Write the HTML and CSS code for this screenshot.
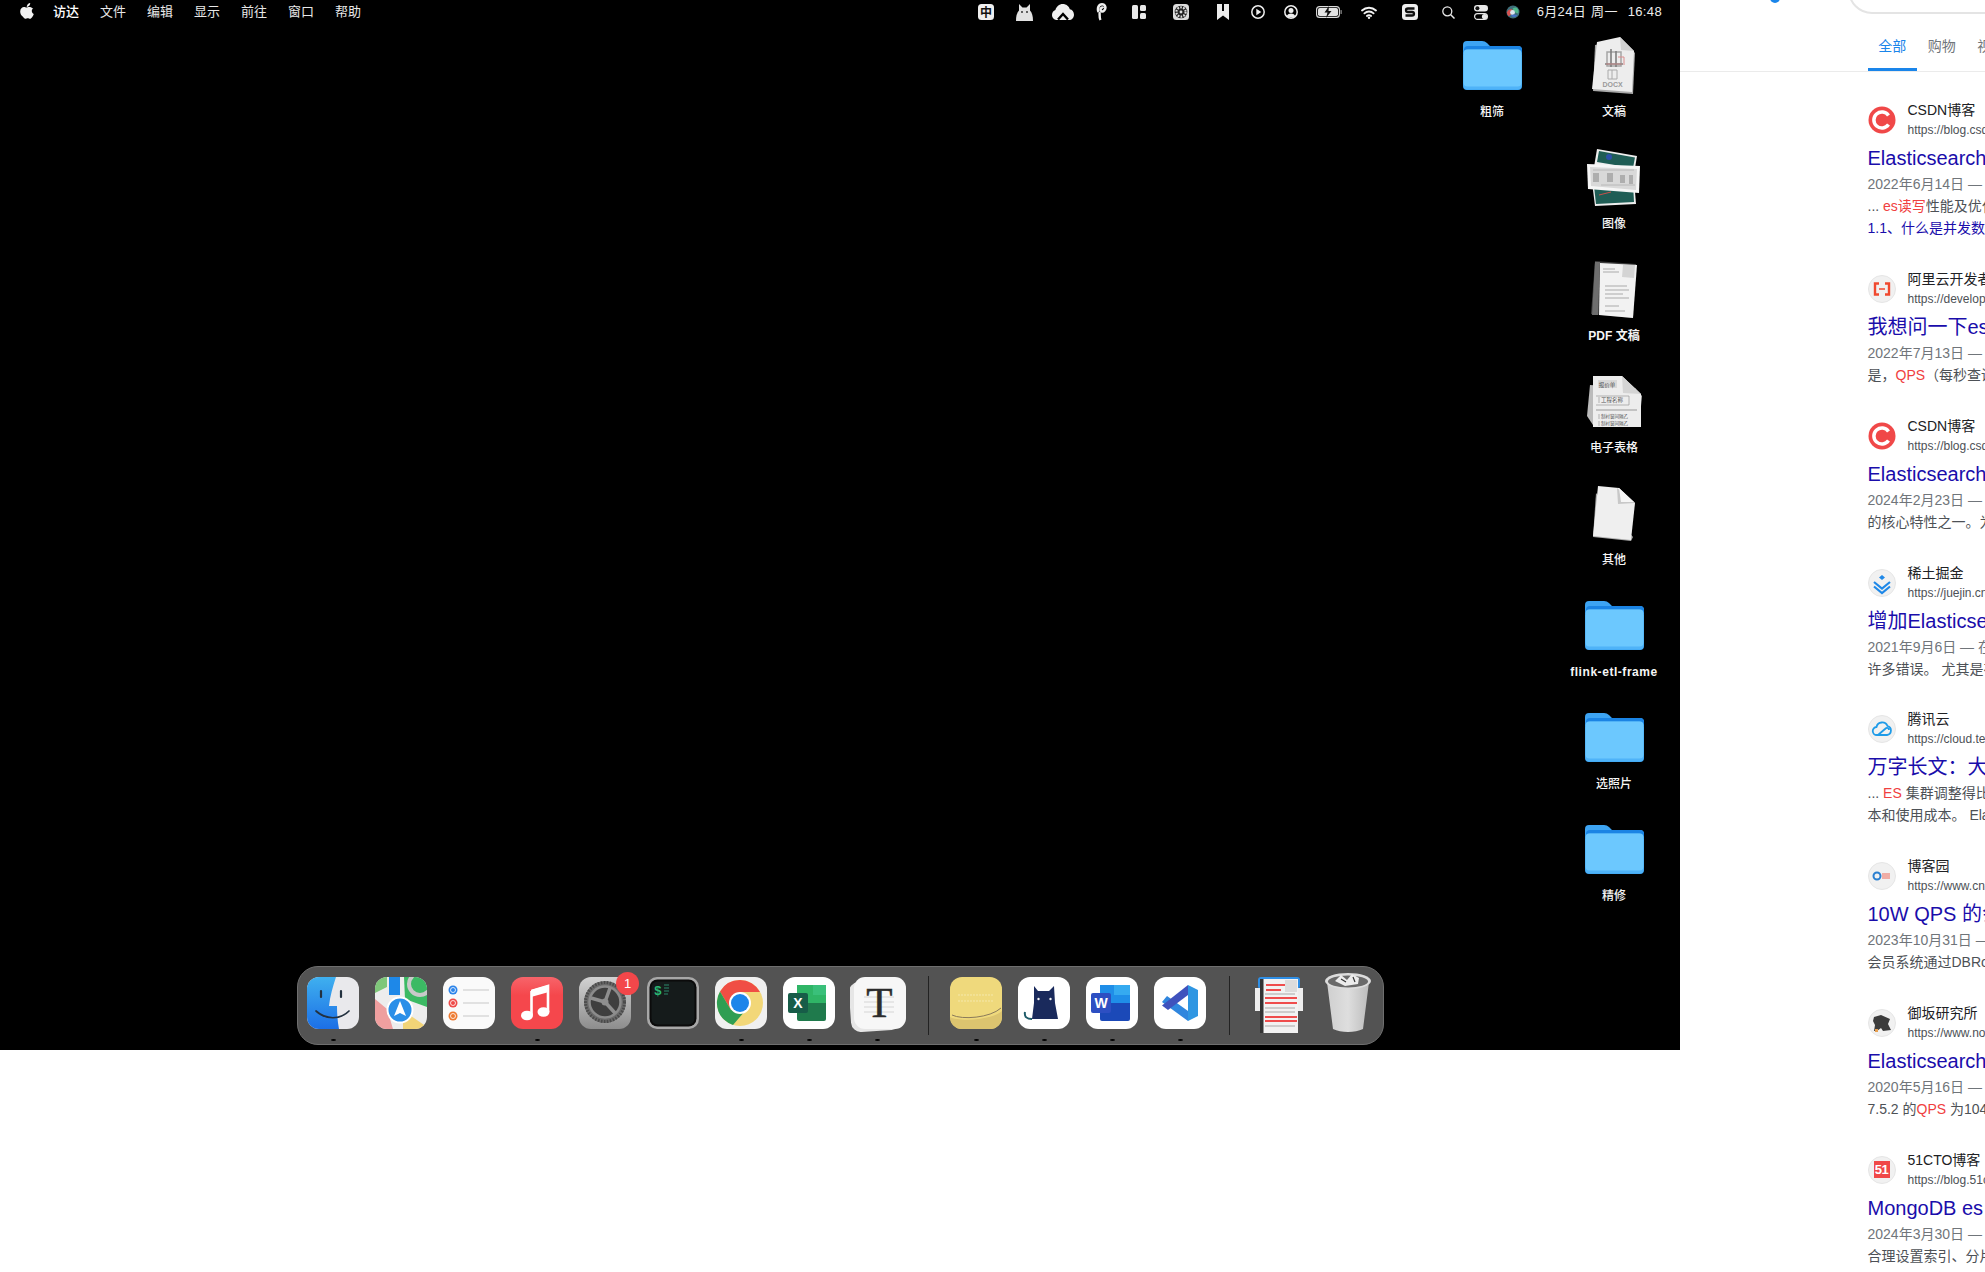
FILE: index.html
```html
<!DOCTYPE html>
<html lang="zh-CN">
<head>
<meta charset="utf-8">
<title>桌面</title>
<link rel="stylesheet" href="styles.css">
</head>
<body>
<svg class="defs" width="0" height="0" aria-hidden="true">
  <defs>
    <symbol id="folder" viewBox="0 0 59 49">
      <path d="M4 0H19q3 0 5 2l3 3H55a4 4 0 0 1 4 4V45a4 4 0 0 1-4 4H4a4 4 0 0 1-4-4V4a4 4 0 0 1 4-4z" fill="#3da4f3"/>
      <path d="M1 9a4 4 0 0 1 4-4H27H55a4 4 0 0 1 4 4v5H0z" fill="#1b84e4"/>
      <rect x="0.5" y="8.5" width="58" height="40" rx="4" fill="#4fb3f8"/>
      <rect x="0.5" y="8.5" width="58" height="37" rx="4" fill="#6cc8fe"/>
    </symbol>
    <linearGradient id="g-finder" x1="0" y1="0" x2="0" y2="1">
      <stop offset="0" stop-color="#3fb0ef"/><stop offset="1" stop-color="#1c6fe6"/>
    </linearGradient>
    <linearGradient id="g-music" x1="0" y1="0" x2="0" y2="1">
      <stop offset="0" stop-color="#f7646a"/><stop offset=".35" stop-color="#f5474c"/><stop offset="1" stop-color="#f5474c"/>
    </linearGradient>
    <linearGradient id="g-gear" x1="0" y1="0" x2="0" y2="1">
      <stop offset="0" stop-color="#d2d2d2"/><stop offset="1" stop-color="#8d8d8d"/>
    </linearGradient>
    <linearGradient id="g-trash" x1="0" y1="0" x2="1" y2="0">
      <stop offset="0" stop-color="#cfcfcf"/><stop offset=".5" stop-color="#dedede"/><stop offset="1" stop-color="#bcbcbc"/>
    </linearGradient>
  </defs>
</svg>
<div class="screen">
  <main class="desktop">
    <header class="menubar">
      <nav class="menu-left">
        <svg class="apple" viewBox="0 0 14 16"><path d="M10.200 0c.1 1.200-.4 2.100-1 2.800-.7.800-1.600 1.200-2.400 1.100C6.700 2.800 7.200 1.800 7.800 1.200 8.400.5 9.400.100 10.200 0zM13.300 5.300c-.9.600-1.500 1.500-1.500 2.700 0 1.400.8 2.400 2 2.900-.4 1.200-1 2.300-1.700 3.300-.6.800-1.200 1.600-2.100 1.600-.9 0-1.200-.5-2.300-.5-1.100 0-1.400.5-2.300.5-.9 0-1.500-.8-2.200-1.700C1 12.500.2 10.400.2 8.500c0-3 2-4.500 3.800-4.500 1 0 1.800.6 2.500.6.600 0 1.600-.7 2.700-.7 1.100 0 2.400.5 3.300 1.400z" fill="#f2f2f2"/></svg>
        <span class="menu-item menu-active">访达</span>
        <span class="menu-item">文件</span>
        <span class="menu-item">编辑</span>
        <span class="menu-item">显示</span>
        <span class="menu-item">前往</span>
        <span class="menu-item">窗口</span>
        <span class="menu-item">帮助</span>
      </nav>
      <div class="status">
        <svg class="st st-zh" viewBox="0 0 16 16"><rect width="16" height="16" rx="3.500" fill="#efefef"/><text x="8" y="12.500" class="st-glyph" text-anchor="middle">中</text></svg>
        <svg class="st st-cat" viewBox="0 0 17 18"><path d="M0 18c0-5 1-8.500 3-10.500V1L6.500 4.500h4L14 1v6.500c2 2 3 5.500 3 10.500z" fill="#e2e2e2"/><circle cx="6" cy="9" r=".9" fill="#222"/><circle cx="11" cy="9" r=".9" fill="#222"/></svg>
        <svg class="st st-cloud" viewBox="0 0 22 16"><path d="M5 16C2.200 16 0 13.800 0 11c0-2.300 1.400-4.300 3.400-4.900C4.200 2.600 7.200 0 10.800 0c3.300 0 6.100 2.100 7 5.200C20.200 5.500 22 7.800 22 10.700 22 13.700 19.800 16 17 16z" fill="#f0f0f0"/><path d="M6 15.500l5-5.500 5 5.500" fill="none" stroke="#000" stroke-width="2.400"/></svg>
        <svg class="st st-p" viewBox="0 0 11 18"><path d="M2.500 9C1 5 2.800 1.300 6 1.300S10.500 5 8.300 7.300 4.600 8 4.600 6.200 6.500 4.200 7.200 5.200" fill="none" stroke="#efefef" stroke-width="2.500"/><path d="M3.500 9c.5 2.800-.5 5.300 1 8" fill="none" stroke="#efefef" stroke-width="2.400"/></svg>
        <svg class="st st-split" viewBox="0 0 14 14"><rect width="6" height="14" rx="1.500" fill="#e8e8e8"/><rect x="8" width="6" height="6" rx="1.500" fill="#e8e8e8"/><rect x="8" y="8" width="6" height="6" rx="1.500" fill="#e8e8e8"/></svg>
        <svg class="st st-wheel" viewBox="0 0 16 16"><rect width="16" height="16" rx="3.500" fill="#dcdcdc"/><circle cx="8" cy="8" r="6.300" fill="#222"/><circle cx="8" cy="8" r="4.600" fill="none" stroke="#ddd" stroke-width="2.200" stroke-dasharray="1.700 1.200"/><circle cx="8" cy="8" r="1.400" fill="#ddd"/></svg>
        <svg class="st st-mark" viewBox="0 0 12 16"><path d="M0 0h5v7H7V0h5v16L6 11.500 0 16z" fill="#ececec"/></svg>
        <svg class="st st-play" viewBox="0 0 14 14"><circle cx="7" cy="7" r="6.200" fill="none" stroke="#eee" stroke-width="1.500"/><path d="M5.300 3.800l5 3.200-5 3.200z" fill="#eee"/></svg>
        <svg class="st st-user" viewBox="0 0 14 14"><circle cx="7" cy="7" r="6.200" fill="none" stroke="#eee" stroke-width="1.500"/><circle cx="7" cy="5.500" r="2.500" fill="#eee"/><path d="M2.800 11c1-2 2.500-2.600 4.200-2.600s3.200.6 4.200 2.600c-2.500 2-5.900 2-8.400 0z" fill="#eee"/></svg>
        <svg class="st st-batt" viewBox="0 0 26 12"><rect x=".6" y=".6" width="22.800" height="10.800" rx="3" fill="none" stroke="#ddd" stroke-width="1.100"/><rect x="2" y="2" width="20" height="8" rx="1.800" fill="#e4e4e4"/><path d="M13 0L8.500 6.500h3L10 12l5.500-7h-3z" fill="#111"/><rect x="24.500" y="4" width="1.300" height="4" rx=".6" fill="#888"/></svg>
        <svg class="st st-wifi" viewBox="0 0 16 13"><path d="M1 4.500a10.300 10.300 0 0 1 14 0M3.400 7.300a6.800 6.800 0 0 1 9.200 0M5.900 10a3.200 3.200 0 0 1 4.200 0" fill="none" stroke="#f2f2f2" stroke-width="1.800" stroke-linecap="round"/><circle cx="8" cy="11.700" r="1.200" fill="#f2f2f2"/></svg>
        <svg class="st st-s" viewBox="0 0 16 16"><rect width="16" height="16" rx="3.500" fill="#efefef"/><path d="M12.500 4.500H6C4.500 4.500 4 5.500 4 6.200S4.500 8 6 8h4c1.500 0 2 1 2 1.800s-.5 1.700-2 1.700H3.500" fill="none" stroke="#111" stroke-width="2.300"/></svg>
        <svg class="st st-search" viewBox="0 0 13 13"><circle cx="5.300" cy="5.300" r="4.500" fill="none" stroke="#e8e8e8" stroke-width="1.300"/><path d="M8.500 8.500l4 4" stroke="#e8e8e8" stroke-width="1.500"/></svg>
        <svg class="st st-ctl" viewBox="0 0 14 15"><rect width="14" height="6.500" rx="3.200" fill="#e8e8e8"/><circle cx="3.400" cy="3.200" r="2" fill="#111"/><rect x=".6" y="8.600" width="12.800" height="5.800" rx="2.900" fill="none" stroke="#e8e8e8" stroke-width="1.200"/><circle cx="10.500" cy="11.500" r="2.600" fill="#e8e8e8"/></svg>
        <svg class="st st-siri" viewBox="0 0 15 15"><circle cx="7.500" cy="7.500" r="7" fill="#3f6f7a"/><path d="M1 8c1-3 4-4 6-3 0 3-2 6-4 7-1-1-2-2.500-2-4z" fill="#d8504f"/><path d="M7 4c2-1.500 4-2 5.500 0 1 1.500 1.200 3.500.5 5-2 0-5-2-6-5z" fill="#4fb98c"/><circle cx="7" cy="8" r="2.600" fill="#dbe6ee"/><path d="M5 11c2-1 5-1 7 0-1 2-5 3-7 0z" fill="#4470c8"/></svg>
        <span class="clock">6月24日 周一&nbsp;&nbsp;16:48</span>
      </div>
    </header>

    <section class="desk-grid">
      <div class="desk-item">
        <div class="desk-icon"><svg class="ic-folder"><use href="#folder"/></svg></div>
        <span class="desk-label">粗筛</span>
      </div>
      <div class="desk-item">
        <div class="desk-icon">
          <svg class="ic-doc" viewBox="0 0 44 57">
            <path d="M3 8L30 3 43 16 41 57 1 54z" fill="#a9a9a9"/>
            <path d="M5 5L28 0 42 14 40 55 0 52z" fill="#ededed"/>
            <path d="M28 0L42 14 29 13z" fill="#d0d0d0"/>
            <path d="M15 15h14v14H15z" fill="none" stroke="#a5a5a5" stroke-width="1.500"/>
            <path d="M19 12v18M24 14v16M13 27h18" stroke="#7f7f7f" stroke-width="1.600"/>
            <path d="M26 20h6v8" stroke="#d98d8d" stroke-width="1" fill="none"/>
            <path d="M14 27h16" stroke="#d98d8d" stroke-width=".8"/>
            <path d="M16 33h9v9h-9zM20 33v9" fill="none" stroke="#aaa"/>
            <text x="20.500" y="50" class="tiny tiny-docx" text-anchor="middle">DOCX</text>
          </svg>
        </div>
        <span class="desk-label">文稿</span>
      </div>
      <div class="desk-spacer"></div>
      <div class="desk-item">
        <div class="desk-icon">
          <svg class="ic-img" viewBox="0 0 54 57">
            <path d="M10 0L50 7 46 31 6 24z" fill="#eee"/>
            <path d="M12 2L48 8.500 46 19 10 13z" fill="#1f5d55"/>
            <circle cx="22" cy="8" r="3" fill="#2b50a8"/>
            <path d="M5 33L47 30 49 55 8 57z" fill="#eee"/>
            <path d="M7 37L46 34 47 53 9 55z" fill="#1f5d55"/>
            <path d="M12 46L24 43" stroke="#c9504a" stroke-width="1"/>
            <path d="M0 15L53 17 52 44 1 40z" fill="#f6f6f6"/>
            <path d="M3 18L50 20 49 41 4 37z" fill="#d9d9d9"/>
            <path d="M6 24h6v9H6zM20 24h6v9h-6zM33 26h5v8h-5zM42 26h4v9h-4z" fill="#aeaeae"/>
            <path d="M14 36H48M6 21H47" stroke="#b8b8b8"/>
          </svg>
        </div>
        <span class="desk-label">图像</span>
      </div>
      <div class="desk-spacer"></div>
      <div class="desk-item">
        <div class="desk-icon">
          <svg class="ic-pdf" viewBox="0 0 46 57">
            <path d="M4 0L45 3 42 57 0 53z" fill="#3c3c3c"/>
            <path d="M9 2L46 4 42 57 8 54z" fill="#f2f2f2"/>
            <path d="M4 1h5L7 54H1z" fill="#6e6e6e"/>
            <path d="M12 8h12M12 11h16M14 25h22M14 29h24M14 33h18M14 37h24M14 45h14M14 50h20" stroke="#aaa" stroke-width="1.200"/>
            <path d="M32 4L44 4 43 17 31 16z" fill="#d4d4d4"/>
          </svg>
        </div>
        <span class="desk-label desk-label-latin">PDF 文稿</span>
      </div>
      <div class="desk-spacer"></div>
      <div class="desk-item">
        <div class="desk-icon">
          <svg class="ic-sheet" viewBox="0 0 55 51">
            <path d="M3 9L0 40 6 49 52 50 55 20 48 12z" fill="#bbb"/>
            <path d="M6 0H35L54 18V51H6z" fill="#ededed"/>
            <path d="M35 0L54 18 36 17z" fill="#d4d4d4"/>
            <rect x="11" y="4" width="19" height="8" fill="#d8d8d8"/>
            <text x="20" y="10.500" class="tiny" text-anchor="middle">报价单</text>
            <text x="14" y="26" class="tiny">工程名称</text>
            <path d="M12 21v6M12 38v5M12 45v5M9 20H42V29H9" fill="none" stroke="#999" stroke-width=".7"/>
            <text x="14" y="42" class="tiny tiny-sm">制衬窗间隔乙</text>
            <text x="14" y="49" class="tiny tiny-sm">制衬窗间隔乙</text>
            <path d="M9 34H50" stroke="#999"/>
          </svg>
        </div>
        <span class="desk-label">电子表格</span>
      </div>
      <div class="desk-spacer"></div>
      <div class="desk-item">
        <div class="desk-icon">
          <svg class="ic-other" viewBox="0 0 43 56">
            <path d="M3 8L40 52 38 56 0 52z" fill="#aaa"/>
            <path d="M5 1L26 3 42 18 38 55 0 51z" fill="#efefef"/>
            <path d="M24 3L42 18 25 19z" fill="#c8c8c8"/>
            <path d="M26 3L41 17 28 17z" fill="#f6f6f6"/>
          </svg>
        </div>
        <span class="desk-label">其他</span>
      </div>
      <div class="desk-spacer"></div>
      <div class="desk-item">
        <div class="desk-icon"><svg class="ic-folder"><use href="#folder"/></svg></div>
        <span class="desk-label desk-label-latin desk-label-wide">flink-etl-frame</span>
      </div>
      <div class="desk-spacer"></div>
      <div class="desk-item">
        <div class="desk-icon"><svg class="ic-folder"><use href="#folder"/></svg></div>
        <span class="desk-label">选照片</span>
      </div>
      <div class="desk-spacer"></div>
      <div class="desk-item">
        <div class="desk-icon"><svg class="ic-folder"><use href="#folder"/></svg></div>
        <span class="desk-label">精修</span>
      </div>
    </section>

    <footer class="dock">
      <div class="dock-item running">
        <svg class="app" viewBox="0 0 52 52">
          <rect width="52" height="52" rx="12" fill="#e9e9ec"/>
          <path d="M12 0H29C26 9 23 19 22 29h8c0 8 .5 15 2 23H12A12 12 0 0 1 0 40V12A12 12 0 0 1 12 0z" fill="url(#g-finder)"/>
          <path d="M14 14v6M34 14v6" stroke="#23313f" stroke-width="2.200" stroke-linecap="round"/>
          <path d="M9 34c10 9 24 9 33 0" fill="none" stroke="#23313f" stroke-width="1.700" stroke-linecap="round"/>
        </svg>
        <i class="dot"></i>
      </div>
      <div class="dock-item">
        <svg class="app" viewBox="0 0 52 52">
          <defs><clipPath id="c-maps"><rect width="52" height="52" rx="12"/></clipPath></defs>
          <g clip-path="url(#c-maps)">
            <rect width="52" height="52" fill="#ededed"/>
            <path d="M29 0H52V30L30 22z" fill="#3cba64"/>
            <circle cx="45" cy="7" r="11" fill="none" stroke="#c9c9c9" stroke-width="4"/>
            <path d="M0 0H12V10L0 16z" fill="#7fc77a"/>
            <path d="M0 22L12 32 18 52H0z" fill="#ef9f9f"/>
            <path d="M28 46L36 39 52 50V52H28z" fill="#f2d477"/>
            <path d="M14 0H25V18H14z" fill="#1e88e8"/>
            <circle cx="25" cy="33" r="12.500" fill="#2a8fe8" stroke="#fff" stroke-width="2"/>
            <path d="M25 24L31 39 25 36 19 39z" fill="#fff"/>
          </g>
        </svg>
        <i class="dot dot-off"></i>
      </div>
      <div class="dock-item">
        <svg class="app" viewBox="0 0 52 52">
          <rect width="52" height="52" rx="12" fill="#fafafa"/>
          <circle cx="10" cy="13" r="4.500" fill="#2c84ea"/><circle cx="10" cy="13" r="2.500" fill="none" stroke="#fff" stroke-width=".8"/>
          <circle cx="10" cy="26" r="4.500" fill="#ee4a48"/><circle cx="10" cy="26" r="2.500" fill="none" stroke="#fff" stroke-width=".8"/>
          <circle cx="10" cy="39" r="4.500" fill="#ee7a30"/><circle cx="10" cy="39" r="2.500" fill="none" stroke="#fff" stroke-width=".8"/>
          <path d="M20 13H46M20 26H46M20 39H46" stroke="#c8c8c8" stroke-width="1.200"/>
        </svg>
        <i class="dot dot-off"></i>
      </div>
      <div class="dock-item running">
        <svg class="app" viewBox="0 0 52 52">
          <rect width="52" height="52" rx="12" fill="url(#g-music)"/>
          <path d="M20.500 14L37 9V35M20.500 14V38" fill="none" stroke="#fff" stroke-width="2.600"/>
          <path d="M20 13L37.800 8V15L20 20z" fill="#fff"/>
          <ellipse cx="16" cy="38.500" rx="6" ry="4.800" fill="#fff"/>
          <ellipse cx="32.500" cy="35" rx="6" ry="4.800" fill="#fff"/>
        </svg>
        <i class="dot"></i>
      </div>
      <div class="dock-item">
        <svg class="app" viewBox="0 0 52 52">
          <rect width="52" height="52" rx="12" fill="url(#g-gear)"/>
          <circle cx="26" cy="25" r="21" fill="#6a6a6a"/>
          <circle cx="26" cy="25" r="19.500" fill="none" stroke="#4a4a4a" stroke-width="3" stroke-dasharray="1.600 1.400"/>
          <circle cx="26" cy="25" r="15.500" fill="#3f3f3f" stroke="#8b8b8b" stroke-width="2.500"/>
          <path d="M26 25L31 11M26 25L12 21M26 25L36 36" stroke="#8f8f8f" stroke-width="3.500"/>
          <circle cx="26" cy="25" r="3.500" fill="#8f8f8f"/>
        </svg>
        <i class="dot dot-off"></i>
        <span class="badge">1</span>
      </div>
      <div class="dock-item">
        <svg class="app" viewBox="0 0 52 52">
          <rect width="52" height="52" rx="10" fill="#a8a8a8"/>
          <rect x="2.500" y="2.500" width="47" height="47" rx="8" fill="#0b0b0b"/>
          <rect x="4.500" y="4.500" width="43" height="43" rx="6" fill="#151b1b"/>
          <text x="7" y="18" class="term">$</text>
          <path d="M17 8h5M17 11h5M17 14h5M17 17h4" stroke="#2c8a6c" stroke-width="1"/>
        </svg>
        <i class="dot dot-off"></i>
      </div>
      <div class="dock-item running">
        <svg class="app" viewBox="0 0 52 52">
          <rect width="52" height="52" rx="12" fill="#f0f0f0"/>
          <circle cx="25" cy="26" r="23" fill="#f2d778"/>
          <path d="M25 3A23 23 0 0 0 5 14.500L16 33 25 15H45A23 23 0 0 0 25 3z" fill="#f04e44"/>
          <path d="M5 14.500A23 23 0 0 0 18 48L30 34 16 33z" fill="#2f9e52"/>
          <circle cx="25" cy="26" r="11" fill="#fff"/>
          <circle cx="25" cy="26" r="9" fill="#1d85ea"/>
        </svg>
        <i class="dot"></i>
      </div>
      <div class="dock-item running">
        <svg class="app" viewBox="0 0 52 52">
          <rect width="52" height="52" rx="12" fill="#fff"/>
          <rect x="14" y="8" width="29" height="36" rx="2" fill="#1f7a4c"/>
          <path d="M14 8H43V26H14z" fill="#2fb566"/>
          <path d="M30 8H43V18H30z" fill="#3ac07a"/>
          <rect x="5" y="16" width="20" height="20" rx="2" fill="#175c48"/>
          <text x="15" y="31" class="app-letter" text-anchor="middle">X</text>
        </svg>
        <i class="dot"></i>
      </div>
      <div class="dock-item running">
        <svg class="app app-wide" viewBox="0 0 56 55">
          <rect x="0" y="4" width="50" height="50" rx="10" transform="rotate(-4 25 30)" fill="#e6e6e6"/>
          <rect x="4" y="0" width="52" height="52" rx="11" fill="#f7f7f7"/>
          <path d="M14 20H44M14 25H44M14 30H44M14 35H44" stroke="#e6e6e6" stroke-width="2"/>
          <text x="29.500" y="40" class="typora-t" text-anchor="middle">T</text>
        </svg>
        <i class="dot"></i>
      </div>
      <span class="dock-sep dock-sep-a"></span>
      <div class="dock-item running">
        <svg class="app" viewBox="0 0 52 52">
          <rect width="52" height="52" rx="12" fill="#efd97c"/>
          <path d="M0 40c10 5 42 3 52-6V40A12 12 0 0 1 40 52H12A12 12 0 0 1 0 40z" fill="#dcc46f"/>
          <path d="M2 38c10 5 38 3 49-7" fill="none" stroke="#8a7a5a" stroke-width="1"/>
          <path d="M8 18H44M8 24H44" stroke="#f5e8aa" stroke-width="1" stroke-dasharray="2 1"/>
        </svg>
        <i class="dot"></i>
      </div>
      <div class="dock-item running">
        <svg class="app" viewBox="0 0 52 52">
          <rect width="52" height="52" rx="12" fill="#fff"/>
          <path d="M16 9L20 14H31L36 9 37 26 40 42H14L16 26z" fill="#1a2a5c"/>
          <path d="M14 42c-5 0-8-2-7-7" fill="none" stroke="#1d5a68" stroke-width="2"/>
          <circle cx="20.500" cy="22" r="1.200" fill="#f4f4f4"/><circle cx="32.500" cy="22" r="1.200" fill="#f4f4f4"/>
        </svg>
        <i class="dot"></i>
      </div>
      <div class="dock-item running">
        <svg class="app" viewBox="0 0 52 52">
          <rect width="52" height="52" rx="12" fill="#fff"/>
          <rect x="14" y="8" width="30" height="36" rx="2" fill="#1b49b8"/>
          <path d="M14 8H44V26H14z" fill="#1f8ee8"/>
          <path d="M28 8H44V18H28z" fill="#35aaf0"/>
          <rect x="5" y="16" width="20" height="20" rx="2" fill="#2d4fc2"/>
          <text x="15" y="31" class="app-letter" text-anchor="middle">W</text>
        </svg>
        <i class="dot"></i>
      </div>
      <div class="dock-item running">
        <svg class="app" viewBox="0 0 52 52">
          <rect width="52" height="52" rx="12" fill="#fff"/>
          <path d="M13 19L34 34V44L8 25z" fill="#2f86de"/>
          <path d="M34 8V18L14 33 8 28.500z" fill="#3f52bd"/>
          <path d="M34 8L44 13V39L34 44z" fill="#2f96e2"/>
        </svg>
        <i class="dot"></i>
      </div>
      <span class="dock-sep dock-sep-b"></span>
      <div class="dock-item">
        <svg class="app app-preview" viewBox="0 0 48 56">
          <rect x="3" y="0" width="42" height="12" rx="3" fill="#2f8fe6"/>
          <rect x="0" y="11" width="48" height="23" fill="#eee"/>
          <rect x="5" y="2" width="38" height="54" fill="#f2f2f2"/>
          <rect x="5" y="2" width="3.500" height="54" fill="#333"/>
          <path d="M11 8H30M11 13H26M10 21H42M10 26H42M10 40H42M10 44H42" stroke="#ef4d4d" stroke-width="1.800"/>
          <path d="M10 17H40M10 31H40M10 35H40M10 49H40" stroke="#a8a8a8" stroke-width="1.200"/>
          <rect x="30" y="3" width="12" height="12" fill="#dcdcdc"/>
        </svg>
        <i class="dot dot-off"></i>
      </div>
      <div class="dock-item">
        <svg class="app app-trash" viewBox="0 0 46 60">
          <path d="M2 10C8 16 38 16 44 10L38 57C30 61 16 61 8 57z" fill="url(#g-trash)"/>
          <ellipse cx="23" cy="9" rx="23" ry="8" fill="#dcdcdc"/>
          <ellipse cx="23" cy="9.500" rx="20" ry="6" fill="#6a6a6a"/>
          <path d="M10 9L16 3 22 8 27 2 34 6 33 12 20 14z" fill="#ececec"/>
          <path d="M16 7L21 10M28 5L30 10" stroke="#333" stroke-width="1.200"/>
        </svg>
        <i class="dot dot-off"></i>
      </div>
    </footer>
  </main>

  <aside class="panel">
    <i class="panel-dot"></i>
    <div class="searchbox"></div>
    <nav class="tabs">
      <span class="tab tab-active">全部</span>
      <span class="tab">购物</span>
      <span class="tab">视频</span>
    </nav>
    <div class="results">
      <article class="result">
        <div class="source">
          <span class="fav fav-bare"><svg viewBox="0 0 28 28"><circle cx="14" cy="14" r="13.500" fill="#f04848"/><path d="M20.500 9.500a8 8 0 1 0 0 9" fill="none" stroke="#fff" stroke-width="3.500"/></svg></span>
          <div class="source-text"><div class="site">CSDN博客</div><div class="url">https://blog.csdn.net</div></div>
        </div>
        <h3 class="title">Elasticsearch 读写性能优化</h3>
        <p class="line date">2022年6月14日 — 读写性能优化</p>
        <p class="line">... <em>es读写</em>性能及优化的总结内容</p>
        <p class="line link">1.1、什么是并发数和吞吐量</p>
      </article>
      <article class="result">
        <div class="source">
          <span class="fav"><svg viewBox="0 0 28 28"><path d="M11 8.500H7v11h4M17 8.500h4v11h-4" fill="none" stroke="#f0492f" stroke-width="2.400"/><path d="M11 14h6" stroke="#f0492f" stroke-width="1.500"/></svg></span>
          <div class="source-text"><div class="site">阿里云开发者社区</div><div class="url">https://developer.aliyun.com</div></div>
        </div>
        <h3 class="title">我想问一下es的读写性能</h3>
        <p class="line date">2022年7月13日 — 想问一下</p>
        <p class="line">是，<em>QPS</em>（每秒查询率）是衡量标准</p>
      </article>
      <article class="result">
        <div class="source">
          <span class="fav fav-bare"><svg viewBox="0 0 28 28"><circle cx="14" cy="14" r="13.500" fill="#f04848"/><path d="M20.500 9.500a8 8 0 1 0 0 9" fill="none" stroke="#fff" stroke-width="3.500"/></svg></span>
          <div class="source-text"><div class="site">CSDN博客</div><div class="url">https://blog.csdn.net</div></div>
        </div>
        <h3 class="title">Elasticsearch 的性能优化</h3>
        <p class="line date">2024年2月23日 — 性能优化</p>
        <p class="line">的核心特性之一。为了提升性能</p>
      </article>
      <article class="result">
        <div class="source">
          <span class="fav"><svg viewBox="0 0 28 28"><path d="M14 6l3 2.500-3 2.500-3-2.500z" fill="#1e88e8"/><path d="M6 13l8 6.500 8-6.500M6 17.500l8 6.500 8-6.500" fill="none" stroke="#1e88e8" stroke-width="2.200"/></svg></span>
          <div class="source-text"><div class="site">稀土掘金</div><div class="url">https://juejin.cn</div></div>
        </div>
        <h3 class="title">增加Elasticsearch写入性能</h3>
        <p class="line date">2021年9月6日 — 在写入时</p>
        <p class="line">许多错误。 尤其是在高并发下</p>
      </article>
      <article class="result">
        <div class="source">
          <span class="fav"><svg viewBox="0 0 28 28"><path d="M9 20a4 4 0 0 1-.5-8A5.800 5.800 0 0 1 19.500 11 4.600 4.600 0 0 1 19 20zM10 20l7-6c2-2 4-1 4 1" fill="none" stroke="#1e9be8" stroke-width="1.800"/></svg></span>
          <div class="source-text"><div class="site">腾讯云</div><div class="url">https://cloud.tencent.com</div></div>
        </div>
        <h3 class="title">万字长文：大规模集群优化</h3>
        <p class="line">... <em>ES</em> 集群调整得比较好的话</p>
        <p class="line">本和使用成本。 Elasticsearch</p>
      </article>
      <article class="result">
        <div class="source">
          <span class="fav"><svg viewBox="0 0 28 28"><circle cx="9" cy="14" r="3.500" fill="none" stroke="#2a7fd0" stroke-width="2"/><path d="M14 12h8M14 14h8M14 16h8" stroke="#ef6a5a" stroke-width="1.200"/></svg></span>
          <div class="source-text"><div class="site">博客园</div><div class="url">https://www.cnblogs.com</div></div>
        </div>
        <h3 class="title">10W QPS 的会员系统</h3>
        <p class="line date">2023年10月31日 — 会员</p>
        <p class="line">会员系统通过DBRoute分片</p>
      </article>
      <article class="result">
        <div class="source">
          <span class="fav"><svg viewBox="0 0 28 28"><path d="M6 8l7-2 9 4-2 5 3 6-8 1-2-3-4 3H6l1-6-2-4z" fill="#3c3c3c"/><path d="M7 20h3v3H7z" fill="#e8a050"/></svg></span>
          <div class="source-text"><div class="site">御坂研究所</div><div class="url">https://www.nosuchfield.com</div></div>
        </div>
        <h3 class="title">Elasticsearch 压测结果</h3>
        <p class="line date">2020年5月16日 — 压测</p>
        <p class="line">7.5.2 的<em>QPS</em> 为10400左右</p>
      </article>
      <article class="result">
        <div class="source">
          <span class="fav"><span class="fav-51">51</span></span>
          <div class="source-text"><div class="site">51CTO博客</div><div class="url">https://blog.51cto.com</div></div>
        </div>
        <h3 class="title">MongoDB es 性能对比</h3>
        <p class="line date">2024年3月30日 — 合理</p>
        <p class="line">合理设置索引、分片和副本数</p>
      </article>
    </div>
  </aside>
</div>
</body>
</html>
```

FILE: styles.css
```css
* { box-sizing: border-box; }
html, body { margin: 0; padding: 0; }
body {
  width: 1985px;
  height: 1272px;
  overflow: hidden;
  background: #fff;
  font-family: "Liberation Sans", "Noto Sans CJK SC", sans-serif;
}
.defs { position: absolute; }
.screen { display: flex; align-items: flex-start; width: 1985px; height: 1272px; }

/* desktop */
.desktop {
  position: relative;
  flex: 0 0 1680px;
  height: 1050px;
  background: #000;
  color: #fff;
}
.menubar {
  display: flex;
  justify-content: space-between;
  align-items: center;
  height: 24px;
  padding: 0 18px 0 20px;
}
.menu-left { display: flex; align-items: center; gap: 21px; }
.apple { width: 14px; height: 16px; margin-right: -2px; margin-top: -2px; }
.menu-item { font-size: 13px; line-height: 22px; color: #e8e8e8; }
.menu-active { color: #fff; font-weight: 500; }
.status { display: flex; align-items: center; }
.st { display: block; flex: none; }
.st-glyph { font-size: 12px; font-weight: 700; fill: #111; }
.st-zh { width: 16px; height: 16px; }
.st-cat { width: 17px; height: 18px; margin-left: 22px; }
.st-cloud { width: 22px; height: 16px; margin-left: 19px; }
.st-p { width: 11px; height: 18px; margin-left: 22px; }
.st-split { width: 14px; height: 14px; margin-left: 25px; }
.st-wheel { width: 16px; height: 16px; margin-left: 27px; }
.st-mark { width: 12px; height: 16px; margin-left: 28px; }
.st-play { width: 14px; height: 14px; margin-left: 22px; }
.st-user { width: 14px; height: 14px; margin-left: 19px; }
.st-batt { width: 26px; height: 12px; margin-left: 18px; }
.st-wifi { width: 16px; height: 13px; margin-left: 19px; }
.st-s { width: 16px; height: 16px; margin-left: 25px; }
.st-search { width: 13px; height: 13px; margin-left: 24px; }
.st-ctl { width: 14px; height: 15px; margin-left: 19px; }
.st-siri { width: 14px; height: 14px; margin-left: 18px; }
.clock { margin-left: 17px; font-size: 13px; line-height: 22px; color: #ececec; white-space: nowrap; word-spacing: 1px; letter-spacing: .35px; }

/* desktop icons: a free canvas of the desktop */
.desk-grid {
  position: absolute;
  top: 32px;
  right: 5px;
  display: grid;
  grid-template-columns: 122px 122px;
  grid-auto-rows: 112px;
}
.desk-spacer { width: 122px; }
.desk-item { display: flex; flex-direction: column; align-items: center; }
.desk-icon { display: flex; align-items: center; justify-content: center; height: 66px; margin-bottom: 6px; }
.desk-label { font-size: 12px; line-height: 16px; font-weight: 500; color: #f6f6f6; white-space: nowrap; }
.desk-label-latin { font-weight: 700; }
.desk-label-wide { letter-spacing: .55px; }
.ic-folder { width: 59px; height: 49px; display: block; }
.ic-doc { width: 44px; height: 57px; }
.ic-img { width: 54px; height: 57px; }
.ic-pdf { width: 46px; height: 57px; }
.ic-sheet { width: 55px; height: 51px; }
.ic-other { width: 43px; height: 56px; }
.tiny { font-size: 5.5px; fill: #555; }
.tiny-docx { font-size: 7px; font-weight: 700; fill: #9a9a9a; }
.tiny-sm { font-size: 4.5px; }

/* dock */
.dock {
  position: absolute;
  left: 297px;
  top: 966px;
  width: 1087px;
  height: 79px;
  display: flex;
  gap: 16px;
  padding: 10px 0 0 9px;
  background: #535353;
  border: 1px solid #6f6f6f;
  border-radius: 21px;
}
.dock-item { position: relative; display: flex; flex-direction: column; align-items: center; width: 52px; height: 64px; }
.app { display: block; width: 52px; height: 52px; flex: none; }
.app-wide { width: 56px; height: 55px; margin: 0 -4px 0 -3px; }
.app-wide + .dot { margin-top: 7px; }
.app-preview { width: 48px; height: 56px; margin: 0 0 0 -4px; }
.app-trash { width: 46px; height: 60px; margin: -5px 0 0 -2px; }
.dot { display: block; width: 5px; height: 5px; margin-top: 10px; border-radius: 50%; background: #000; }
.dot-off { visibility: hidden; }
.dock-sep { flex: none; width: 1px; height: 59px; margin-top: -1px; background: #222; }
.dock-sep-a { margin-left: 9px; margin-right: 5px; }
.dock-sep-b { margin-left: 7px; margin-right: 9px; }
.badge {
  position: absolute;
  top: -5px;
  right: -8px;
  width: 23px;
  height: 23px;
  border-radius: 50%;
  background: #f3474a;
  color: #fff;
  font-size: 13px;
  line-height: 23px;
  text-align: center;
}
.term { font-size: 13px; font-weight: 700; fill: #2bb673; font-family: "Liberation Mono", monospace; }
.app-letter { font-size: 14px; font-weight: 700; fill: #fff; }
.typora-t { font-family: "Liberation Serif", serif; font-size: 43px; fill: #2c2c2c; stroke: #2c2c2c; stroke-width: .5px; }

/* search panel */
.panel {
  position: relative;
  flex: 0 0 305px;
  height: 1272px;
  overflow: hidden;
  background: #fff;
}
.panel-dot { position: absolute; left: 90px; top: -7px; width: 10px; height: 10px; border-radius: 50%; background: #1a85ea; }
.searchbox {
  height: 54px;
  width: 420px;
  margin: -40px 0 0 168px;
  border: 2px solid #e4e4e4;
  border-radius: 24px;
}
.tabs {
  display: flex;
  height: 58px;
  padding: 21px 0 0 187.500px;
  border-bottom: 1px solid #ebebeb;
}
.tab { flex: none; width: 49.500px; height: 36px; padding-top: 1px; font-size: 14px; line-height: 20px; color: #70757a; text-align: center; white-space: nowrap; }
.tab-active { color: #1a85ea; border-bottom: 3px solid #1a85ea; }
.results { display: flex; flex-direction: column; gap: 29.800px; padding: 28.300px 0 0 187.500px; }
.result { width: 600px; }
.source { display: flex; align-items: center; gap: 12px; height: 40px; }
.fav { display: flex; align-items: center; justify-content: center; flex: none; width: 28px; height: 28px; border-radius: 50%; background: #f1f1f1; border: 1px solid #e6e6e6; }
.fav svg { display: block; width: 28px; height: 28px; flex: none; }
.fav-bare { background: none; border: 0; }
.fav-51 { display: block; width: 16px; height: 17px; background: #f04848; color: #fff; font-size: 13px; line-height: 17px; font-weight: 700; text-align: center; letter-spacing: -.5px; }
.source-text { display: flex; flex-direction: column; }
.site { font-size: 14px; line-height: 20px; color: #202124; white-space: nowrap; }
.url { font-size: 12px; line-height: 20px; color: #4d5156; white-space: nowrap; }
.title { margin: 0; height: 33px; font-size: 20px; line-height: 36px; font-weight: 400; color: #1a0dab; white-space: nowrap; }
.line { margin: 0; font-size: 14px; line-height: 22px; color: #4d5156; white-space: nowrap; }
.line em { font-style: normal; color: #f04040; }
.date { color: #70757a; }
.link { color: #1a0dab; }
```
